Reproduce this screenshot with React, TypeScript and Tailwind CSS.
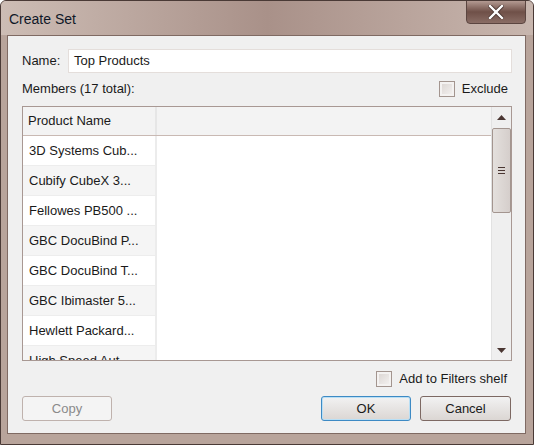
import React from "react";

const members = [
  "3D Systems Cub...",
  "Cubify CubeX 3...",
  "Fellowes PB500 ...",
  "GBC DocuBind P...",
  "GBC DocuBind T...",
  "GBC Ibimaster 5...",
  "Hewlett Packard...",
  "High Speed Aut...",
];

const CheckBox = () => (
  <span className="inline-block w-[16px] h-[16px] border border-[#a3958f] bg-gradient-to-br from-[#d9d3d0] to-[#f6f4f3] shadow-[inset_0_0_0_2px_#f4f2f1]" />
);

const App = () => {
  return (
    <div
      className="w-[534px] h-[445px] bg-[#b8a49b] border border-[#4a3a36] rounded-t-[6px] flex flex-col overflow-hidden text-[#1a1a1a]"
      style={{ fontFamily: '"Liberation Sans", Arial, sans-serif' }}
    >
      {/* Title bar */}
      <div className="h-[34px] relative bg-gradient-to-r from-[#cdbdb5] via-[#a99189] to-[#c8b6ae] flex items-start">
        <span className="ml-[8px] mt-[9px] text-[14px] text-[#101828] leading-[18px]">Create Set</span>
        <div className="absolute top-[-1px] right-[7px] w-[60px] h-[24px] rounded-b-[4px] border border-[#5b4540] bg-gradient-to-b from-[#b39a92] via-[#6f5048] to-[#8a6d65] flex items-center justify-center">
          <svg width="16" height="14" viewBox="0 0 16 14">
            <path d="M2 1 L14 13 M14 1 L2 13" stroke="#4a3430" strokeWidth="4" strokeLinecap="square" />
            <path d="M2 1 L14 13 M14 1 L2 13" stroke="#ffffff" strokeWidth="2.4" strokeLinecap="square" />
          </svg>
        </div>
      </div>

      {/* Client area */}
      <div className="ml-[6px] mr-[7px] mb-[10px] flex-1 border border-[#7f6a63] bg-[#f0f0f0] flex flex-col pl-[14px] pr-[13px] text-[13px]">
        <div className="flex items-center mt-[13px] h-[24px]">
          <span className="w-[46px]">Name:</span>
          <div className="flex-1 h-[24px] bg-white border border-[#e4dedb] flex items-center pl-[5px]">
            Top Products
          </div>
        </div>

        <div className="flex items-center justify-between mt-[8px] h-[16px]">
          <span>Members (17 total):</span>
          <div className="flex items-center gap-[7px] mr-[4px]">
            <CheckBox />
            <span>Exclude</span>
          </div>
        </div>

        {/* Table */}
        <div className="mt-[9px] h-[255px] border border-[#a89893] bg-white flex overflow-hidden">
          <div className="flex-1 flex flex-col overflow-hidden">
            <div className="h-[29px] shrink-0 flex bg-[#f3f3f3] border-b border-[#c9b9b3]">
              <div className="w-[134px] border-r-2 border-[#e6e6e6] flex items-center pl-[5px]">Product Name</div>
              <div className="flex-1" />
            </div>
            <div className="flex-1 flex overflow-hidden">
              <div className="w-[134px] border-r-2 border-[#ececec] flex flex-col">
                {members.map((m, i) => (
                  <div
                    key={m}
                    className={`h-[30px] shrink-0 flex items-center pl-[6px] border-b border-[#ededed] ${
                      i % 2 === 0 ? "bg-white" : "bg-[#f5f5f5]"
                    }`}
                  >
                    {m}
                  </div>
                ))}
              </div>
              <div className="flex-1" />
            </div>
          </div>

          {/* Scrollbar */}
          <div className="w-[20px] bg-[#efefef] border-l border-[#e2e2e2] flex flex-col items-center">
            <div className="h-[21px] flex items-center justify-center">
              <svg width="9" height="5" viewBox="0 0 9 5"><path d="M0 5 L4.5 0 L9 5 Z" fill="#4a3632" /></svg>
            </div>
            <div className="w-[19px] h-[85px] rounded-[2px] border border-[#a3958f] bg-gradient-to-r from-[#e4e0dd] to-[#d5cecb] flex items-center justify-center">
              <div className="flex flex-col gap-[2px]">
                <div className="w-[7px] h-[1px] bg-[#4a3632]" />
                <div className="w-[7px] h-[1px] bg-[#4a3632]" />
                <div className="w-[7px] h-[1px] bg-[#4a3632]" />
              </div>
            </div>
            <div className="flex-1" />
            <div className="h-[20px] flex items-center justify-center">
              <svg width="9" height="5" viewBox="0 0 9 5"><path d="M0 0 L9 0 L4.5 5 Z" fill="#4a3632" /></svg>
            </div>
          </div>
        </div>

        <div className="flex items-center justify-end mt-[10px] h-[16px] gap-[7px] mr-[5px]">
          <CheckBox />
          <span>Add to Filters shelf</span>
        </div>

        <div className="flex items-center mt-[9px] h-[25px]">
          <button className="w-[90px] h-[25px] rounded-[3px] border border-[#bfb2ad] bg-[#f4f4f4] text-[#8a8a8a]">Copy</button>
          <div className="flex-1" />
          <button className="w-[90px] h-[25px] rounded-[3px] border border-[#3d8ac4] bg-gradient-to-b from-[#f2f2f2] to-[#dbd6d3] shadow-[inset_0_0_0_1px_#b9dff5]">OK</button>
          <button className="ml-[9px] mr-[1px] w-[91px] h-[25px] rounded-[3px] border border-[#7d6963] bg-gradient-to-b from-[#f2f2f2] to-[#dbd6d3]">Cancel</button>
        </div>
      </div>
    </div>
  );
};

export default App;
